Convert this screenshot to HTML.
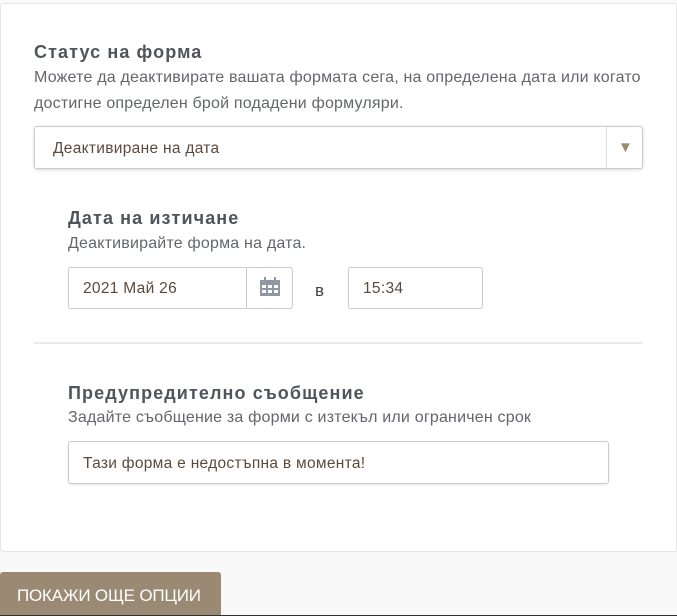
<!DOCTYPE html>
<html><head><meta charset="utf-8"><style>
body{margin:0;width:677px;height:616px;background:#f9f9f9;font-family:"Liberation Sans",sans-serif;position:relative;overflow:hidden;color:#555a5f}
.card{position:absolute;left:0;top:3px;width:675px;height:547px;background:#fff;border:1px solid #e6e6e6;border-radius:3px}
.a{position:absolute;white-space:nowrap}
.h{font-weight:bold;font-size:18px;color:#50555b;letter-spacing:1.1px}
.d{font-size:16px;color:#63666a;letter-spacing:0.2px}
.box{position:absolute;background:#fff;border:1px solid #ccc;border-radius:3px;box-sizing:border-box;font-size:15.5px;color:#5a4a3c;letter-spacing:0.3px}
</style></head><body>
<div class="card"></div>
<div class="a h" style="left:34px;top:42px">Статус на форма</div>
<div class="a d" style="left:34px;top:69px">Можете да деактивирате вашата формата сега, на определена дата или когато</div>
<div class="a d" style="left:34px;top:95px">достигне определен брой подадени формуляри.</div>
<div class="box" style="left:34px;top:126px;width:609px;height:43px;box-shadow:0 1px 3px rgba(0,0,0,.15)"><span class="a" style="left:18px;top:13px">Деактивиране на дата</span><div class="a" style="left:571px;top:0;height:41px;border-left:1px solid #ddd;width:36px"></div><span class="a" style="left:583px;top:12px;color:#9a8a74;font-size:15px">▼</span></div>
<div class="a h" style="left:68px;top:208px">Дата на изтичане</div>
<div class="a d" style="left:68px;top:235px">Деактивирайте форма на дата.</div>
<div class="box" style="left:68px;top:267px;width:180px;height:42px"><span class="a" style="left:14px;top:12px">2021 Май 26</span></div>
<div class="box" style="left:246px;top:267px;width:47px;height:42px;border-radius:0 3px 3px 0">
<svg class="a" style="left:13px;top:9px" width="20" height="19" viewBox="0 0 20 19"><rect x="0" y="3" width="20" height="16" fill="#8e98a4"/><rect x="4" y="0" width="2" height="5" fill="#8e98a4"/><rect x="14" y="0" width="2" height="5" fill="#8e98a4"/><g fill="#fff"><rect x="2" y="8" width="4" height="3"/><rect x="8" y="8" width="4" height="3"/><rect x="14" y="8" width="4" height="3"/><rect x="2" y="13" width="4" height="3"/><rect x="8" y="13" width="4" height="3"/><rect x="14" y="13" width="4" height="3"/></g></svg></div>
<div class="a" style="left:315px;top:281px;font-size:17px;color:#444">в</div>
<div class="box" style="left:348px;top:267px;width:135px;height:42px"><span class="a" style="left:14px;top:12px">15:34</span></div>
<div class="a" style="left:34px;top:342px;width:609px;height:2px;background:#ece9e6"></div>
<div class="a h" style="left:68px;top:383px">Предупредително съобщение</div>
<div class="a d" style="left:68px;top:409px">Задайте съобщение за форми с изтекъл или ограничен срок</div>
<div class="box" style="left:68px;top:441px;width:541px;height:43px;box-shadow:0 1px 2px rgba(0,0,0,.1)"><span class="a" style="left:14px;top:13px">Тази форма е недостъпна в момента!</span></div>
<div class="a" style="left:0;top:572px;width:221px;height:44px;background:#9a8a74;border-radius:3px 3px 0 0;color:#fff;font-size:17px;letter-spacing:-0.2px"><span class="a" style="left:17px;top:14px">ПОКАЖИ ОЩЕ ОПЦИИ</span></div>
<div class="a" style="left:0;top:615px;width:677px;height:1px;background:#2b3338"></div>
</body></html>
